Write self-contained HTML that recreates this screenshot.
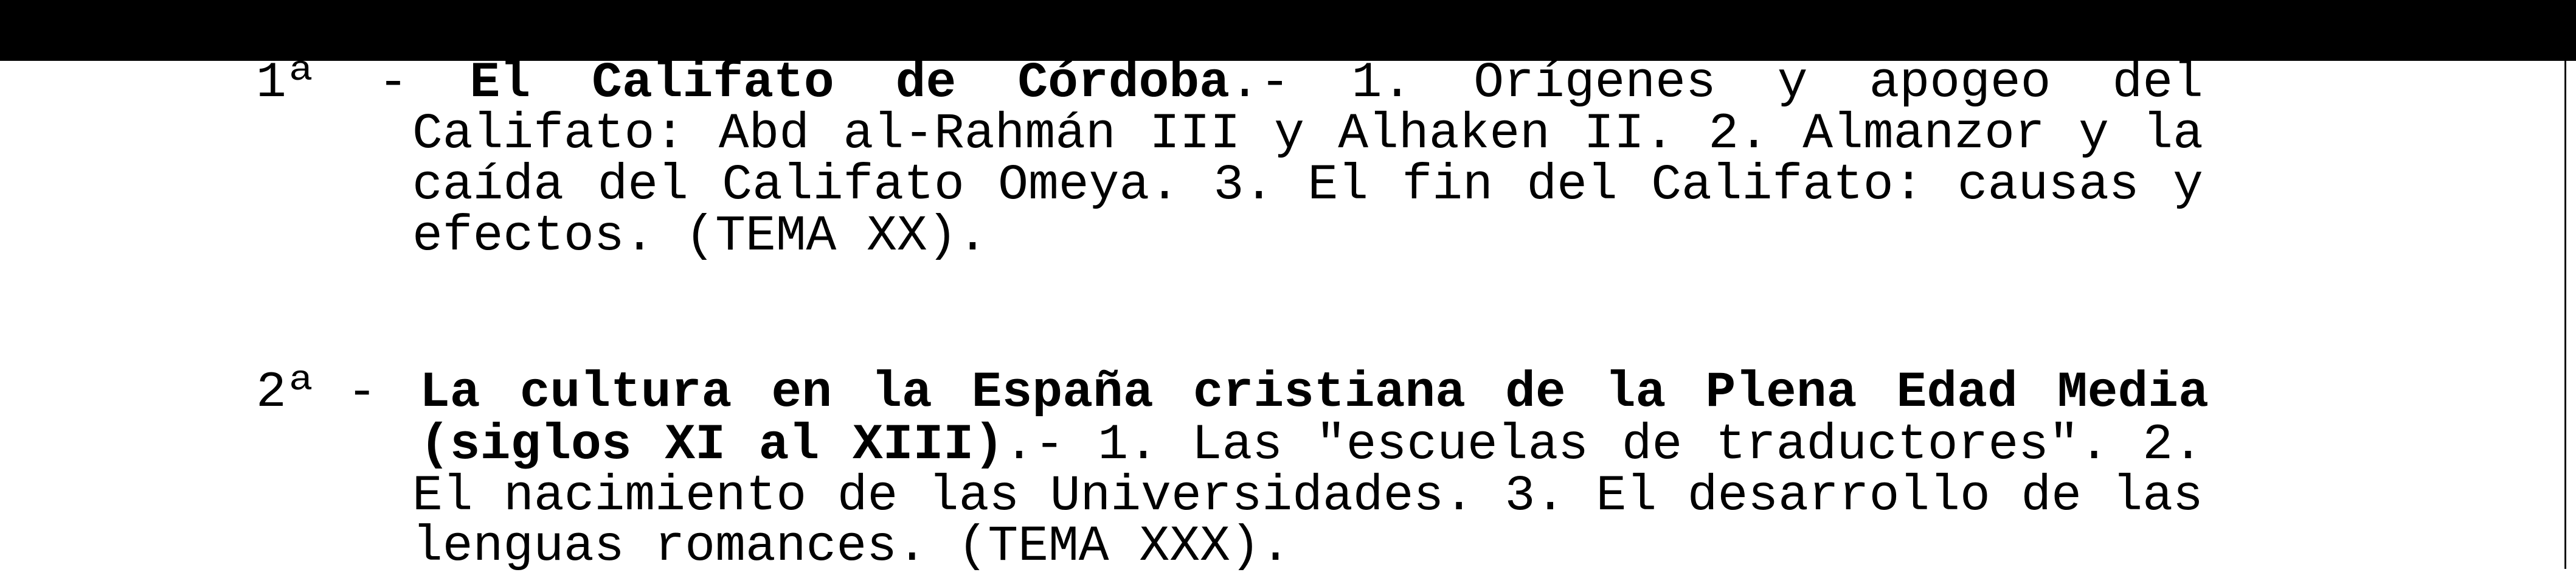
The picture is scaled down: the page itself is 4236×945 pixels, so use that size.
<!DOCTYPE html>
<html><head><meta charset="utf-8"><style>
html,body{margin:0;padding:0;background:#fff;}
body{width:4236px;height:935px;position:relative;overflow:hidden;font-family:"Liberation Mono","Courier New",monospace;font-size:83px;color:#000;}
.bar{position:absolute;left:0;top:0;width:4236px;height:100px;background:#000;}
.vl{position:absolute;left:4217px;top:100px;width:3px;height:835px;background:#111;}
.l{position:absolute;line-height:85px;white-space:nowrap;}
.j{display:flex;justify-content:space-between;}
b{font-weight:bold;}
</style></head><body>
<div class="bar"></div>
<div class="vl"></div>
<div class="l j" style="left:421px;top:94px;width:3202px;"><span>1ª</span><span>-</span><b>El</b><b>Califato</b><b>de</b><span><b>Córdoba</b>.-</span><span>1.</span><span>Orígenes</span><span>y</span><span>apogeo</span><span>del</span></div>
<div class="l j" style="left:678px;top:178px;width:2945px;"><span>Califato:</span><span>Abd</span><span>al-Rahmán</span><span>III</span><span>y</span><span>Alhaken</span><span>II.</span><span>2.</span><span>Almanzor</span><span>y</span><span>la</span></div>
<div class="l j" style="left:678px;top:262px;width:2945px;"><span>caída</span><span>del</span><span>Califato</span><span>Omeya.</span><span>3.</span><span>El</span><span>fin</span><span>del</span><span>Califato:</span><span>causas</span><span>y</span></div>
<div class="l" style="left:678px;top:346px;">efectos. (TEMA XX).</div>
<div class="l" style="left:421px;top:603px;">2ª -</div>
<div class="l j" style="left:690px;top:603px;width:2942px;"><b>La</b><b>cultura</b><b>en</b><b>la</b><b>España</b><b>cristiana</b><b>de</b><b>la</b><b>Plena</b><b>Edad</b><b>Media</b></div>
<div class="l j" style="left:690px;top:689px;width:2933px;"><b>(siglos</b><b>XI</b><b>al</b><span><b>XIII)</b>.-</span><span>1.</span><span>Las</span><span>"escuelas</span><span>de</span><span>traductores".</span><span>2.</span></div>
<div class="l j" style="left:678px;top:773px;width:2945px;"><span>El</span><span>nacimiento</span><span>de</span><span>las</span><span>Universidades.</span><span>3.</span><span>El</span><span>desarrollo</span><span>de</span><span>las</span></div>
<div class="l" style="left:678px;top:856px;">lenguas romances. (TEMA XXX).</div>
</body></html>
